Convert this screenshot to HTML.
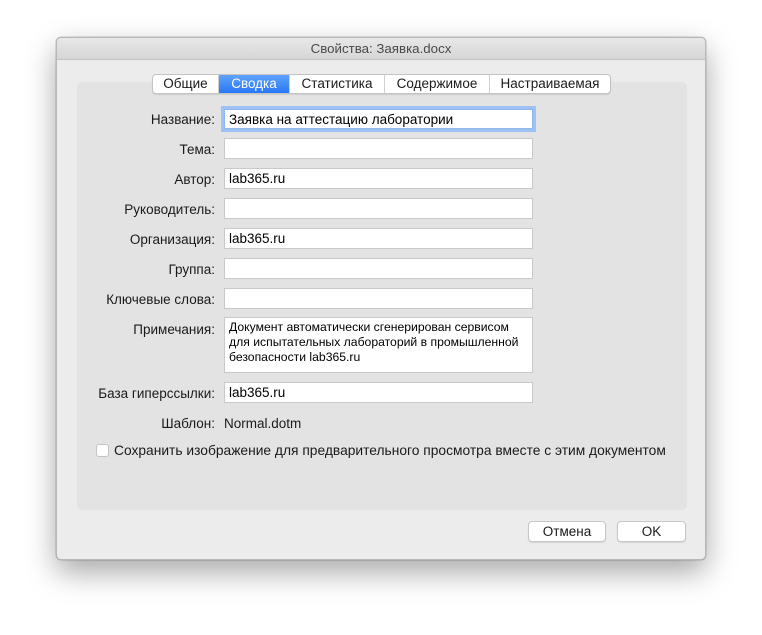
<!DOCTYPE html>
<html><head><meta charset="utf-8"><style>
*{box-sizing:border-box}
body{margin:0;width:762px;height:635px;background:#fff;font-family:"Liberation Sans","DejaVu Sans",sans-serif;font-size:13.5px;color:#1a1a1a;position:relative;overflow:hidden}
.win{position:absolute;left:56px;top:37px;width:650px;height:523px;background:#ececec;border:1px solid #b8b8b8;border-radius:5px;box-shadow:0 12px 30px rgba(0,0,0,.35),0 0 0 .5px rgba(0,0,0,.2)}
.title{position:absolute;left:0;top:0;width:100%;height:22px;background:linear-gradient(#e8e8e8,#d6d6d6);border-bottom:1px solid #c4c4c4;border-radius:5px 5px 0 0;text-align:center;line-height:22px;color:#4a4a4a;font-size:13.3px}
.group{position:absolute;left:20px;top:44px;width:610px;height:428px;background:#e3e3e3;border-radius:5px}
.tabs{position:absolute;left:95px;top:36px;height:20px;display:flex;border:1px solid #c4c4c4;border-radius:4px;background:#fff;overflow:hidden;box-shadow:0 1px 1px rgba(0,0,0,.1)}
.tabs div{height:18px;line-height:18px;text-align:center;border-left:1px solid #d0d0d0}
.tabs div:first-child{border-left:none}
.tabs .on{background:linear-gradient(#5fa3fb,#2877f5);color:#fff}
.lbl{position:absolute;right:490px;text-align:right;white-space:nowrap}
.f{position:absolute;left:167px;width:309px;height:21px;background:#fff;border:1px solid #c9c9c9;padding:2px 4px;line-height:16px;color:#000}
.f.focus{border:1px solid #8eb6ef;box-shadow:0 0 0 3px #9ec2f3;height:20px}
.btn{position:absolute;top:483px;height:21px;background:#fff;border:1px solid #c8c8c8;border-radius:4px;text-align:center;line-height:19px;box-shadow:0 1px 1px rgba(0,0,0,.1)}
</style></head><body>
<div class="win">
<div class="title">Свойства: Заявка.docx</div>
<div class="group"></div>
<div class="tabs">
<div style="width:65px">Общие</div><div class="on" style="width:71px">Сводка</div><div style="width:95px">Статистика</div><div style="width:105px">Содержимое</div><div style="width:121px">Настраиваемая</div>
</div>
<div class="lbl" style="top:74px">Название:</div><div class="f focus" style="top:71px">Заявка на аттестацию лаборатории</div>
<div class="lbl" style="top:104px">Тема:</div><div class="f" style="top:100px"></div>
<div class="lbl" style="top:134px">Автор:</div><div class="f" style="top:130px">lab365.ru</div>
<div class="lbl" style="top:164px">Руководитель:</div><div class="f" style="top:160px"></div>
<div class="lbl" style="top:194px">Организация:</div><div class="f" style="top:190px">lab365.ru</div>
<div class="lbl" style="top:224px">Группа:</div><div class="f" style="top:220px"></div>
<div class="lbl" style="top:254px">Ключевые слова:</div><div class="f" style="top:250px"></div>
<div class="lbl" style="top:284px">Примечания:</div><div class="f" style="top:279px;height:56px;font-size:12.2px;line-height:15px">Документ автоматически сгенерирован сервисом для испытательных лабораторий в промышленной безопасности lab365.ru</div>
<div class="lbl" style="top:348px">База гиперссылки:</div><div class="f" style="top:344px">lab365.ru</div>
<div class="lbl" style="top:378px">Шаблон:</div><div style="position:absolute;left:167px;top:378px">Normal.dotm</div>
<div style="position:absolute;left:39px;top:406px;width:13px;height:13px;background:#fff;border:1px solid #c4c4c4;border-radius:3px"></div>
<div style="position:absolute;left:57px;top:405px;white-space:nowrap;font-size:13.8px">Сохранить изображение для предварительного просмотра вместе с этим документом</div>
<div class="btn" style="left:471px;width:78px">Отмена</div>
<div class="btn" style="left:560px;width:69px">OK</div>
</div>
</body></html>
